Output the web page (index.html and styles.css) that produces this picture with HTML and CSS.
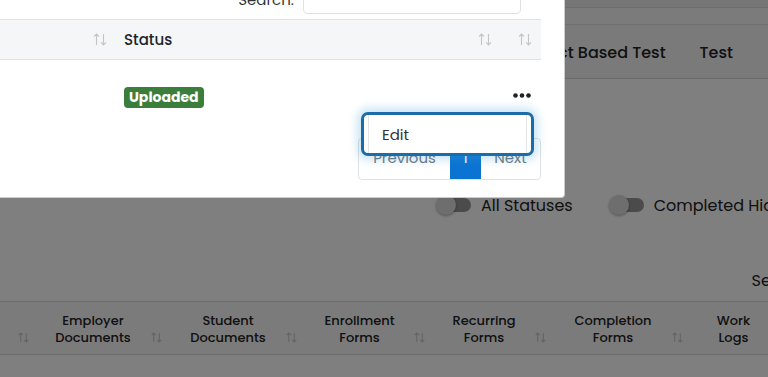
FILE: index.html
```html
<!DOCTYPE html>
<html lang="en">
<head>
<meta charset="utf-8">
<title>Documents</title>
<link rel="stylesheet" href="styles.css">
</head>
<body>
<div class="page">
  <div class="topstrip"></div>
  <div class="subbar"></div>
  <div class="tabs">
    <span class="tab">Project Based Test</span>
    <span class="tab">Test</span>
  </div>
  <div class="filters">
    <div class="switch"><span class="sw"><span class="track"></span><span class="knob"></span></span><span class="sw-label">All Statuses</span></div>
    <div class="switch"><span class="sw"><span class="track"></span><span class="knob"></span></span><span class="sw-label">Completed Hidden</span></div>
  </div>
  <div class="searchrow"><span class="slabel">Search:</span></div>
  <div class="ghead">
    <div class="gcell"><span class="gtext"></span><svg class="sort-s" viewBox="0 0 12 12"><path d="M3 11V1M0.8 3.4L3 1l2.2 2.4M9 1v10M6.8 8.6L9 11l2.2-2.4"/></svg></div>
    <div class="gcell"><span class="gtext"><span class="ln">Employer</span><span class="ln">Documents</span></span><svg class="sort-s" viewBox="0 0 12 12"><path d="M3 11V1M0.8 3.4L3 1l2.2 2.4M9 1v10M6.8 8.6L9 11l2.2-2.4"/></svg></div>
    <div class="gcell"><span class="gtext"><span class="ln">Student</span><span class="ln">Documents</span></span><svg class="sort-s" viewBox="0 0 12 12"><path d="M3 11V1M0.8 3.4L3 1l2.2 2.4M9 1v10M6.8 8.6L9 11l2.2-2.4"/></svg></div>
    <div class="gcell"><span class="gtext"><span class="ln">Enrollment</span><span class="ln">Forms</span></span><svg class="sort-s" viewBox="0 0 12 12"><path d="M3 11V1M0.8 3.4L3 1l2.2 2.4M9 1v10M6.8 8.6L9 11l2.2-2.4"/></svg></div>
    <div class="gcell"><span class="gtext"><span class="ln">Recurring</span><span class="ln">Forms</span></span><svg class="sort-s" viewBox="0 0 12 12"><path d="M3 11V1M0.8 3.4L3 1l2.2 2.4M9 1v10M6.8 8.6L9 11l2.2-2.4"/></svg></div>
    <div class="gcell"><span class="gtext"><span class="ln">Completion</span><span class="ln">Forms</span></span><svg class="sort-s" viewBox="0 0 12 12"><path d="M3 11V1M0.8 3.4L3 1l2.2 2.4M9 1v10M6.8 8.6L9 11l2.2-2.4"/></svg></div>
    <div class="gcell"><span class="gtext"><span class="ln">Work</span><span class="ln">Logs</span></span><svg class="sort-s" viewBox="0 0 12 12"><path d="M3 11V1M0.8 3.4L3 1l2.2 2.4M9 1v10M6.8 8.6L9 11l2.2-2.4"/></svg></div>
  </div>
</div>

<div class="overlay"></div>

<div class="modal">
  <div class="msearch">
    <label class="mlabel">Search:</label>
    <span class="minput"></span>
  </div>
  <div class="mtable">
    <div class="mhead">
      <div class="mc c1"><span></span><svg class="sort-m" viewBox="0 0 14 13"><path d="M3.5 12V1M1 3.7L3.5 1 6 3.7M10.5 1v11M8 9.3l2.5 2.7 2.5-2.7"/></svg></div>
      <div class="mc c2"><span class="mth">Status</span><svg class="sort-m" viewBox="0 0 14 13"><path d="M3.5 12V1M1 3.7L3.5 1 6 3.7M10.5 1v11M8 9.3l2.5 2.7 2.5-2.7"/></svg></div>
      <div class="mc c3"><span></span><svg class="sort-m" viewBox="0 0 14 13"><path d="M3.5 12V1M1 3.7L3.5 1 6 3.7M10.5 1v11M8 9.3l2.5 2.7 2.5-2.7"/></svg></div>
    </div>
    <div class="mrow">
      <div class="mc c1"></div>
      <div class="mc c2"><span class="badge">Uploaded</span></div>
      <div class="mc c3 actions"><svg class="dots" viewBox="0 0 18 5"><circle cx="2.5" cy="2.5" r="2.3"/><circle cx="9" cy="2.5" r="2.3"/><circle cx="15.5" cy="2.5" r="2.3"/></svg></div>
    </div>
  </div>
  <div class="pager-row">
    <div class="pager">
      <span class="pg prev">Previous</span>
      <span class="pg active">1</span>
      <span class="pg next">Next</span>
    </div>
  </div>
</div>

<div class="dropdown">
  <div class="ditem">Edit</div>
</div>
</body>
</html>
```

FILE: styles.css
```css
* { box-sizing: border-box; }
html, body { margin: 0; padding: 0; }
body {
  width: 768px;
  height: 377px;
  overflow: hidden;
  position: relative;
  font-family: "Poppins", "Open Sans", "Noto Sans", sans-serif;
  color: #222;
  background: #fff;
}

/* background page */
.page { width: 768px; }
.topstrip { height: 8px; background: #ececec; border-bottom: 1px solid #dadada; }
.subbar { height: 17px; background: #f7f7f7; border-bottom: 1px solid #dedede; }
.tabs {
  height: 54px;
  background: #f4f4f4;
  border-bottom: 1px solid #d6d6d6;
  display: flex;
  justify-content: flex-end;
  align-items: center;
  gap: 34px;
  padding-right: 35px;
  padding-top: 2px;
  white-space: nowrap;
}
.tab { font-size: 16px; font-weight: 500; color: #222; }

.filters {
  margin-top: 116px;
  height: 20px;
  display: flex;
  align-items: center;
  gap: 36px;
  padding-left: 436px;
  white-space: nowrap;
}
.switch { display: flex; align-items: center; gap: 10px; }
.sw { position: relative; width: 35px; height: 20px; display: block; }
.track {
  position: absolute; left: 9px; top: 3px;
  width: 26px; height: 14px; border-radius: 7px;
  background: #979797;
}
.knob {
  position: absolute; left: 0; top: 0;
  width: 20px; height: 20px; border-radius: 50%;
  background: #dcdcdc;
  box-shadow: 0 1px 3px rgba(0,0,0,.35);
}
.sw-label { font-size: 16px; color: #222; }

.searchrow {
  margin-top: 57px;
  height: 18px;
  display: flex;
  justify-content: flex-end;
  white-space: nowrap;
  overflow: hidden;
}
.slabel { font-size: 16px; line-height: 18px; color: #222; margin-right: -43px; }

.ghead {
  margin-top: 11px;
  height: 54px;
  background: #f7f7f7;
  border-top: 1px solid #d8d8d8;
  border-bottom: 1px solid #d8d8d8;
  display: grid;
  grid-template-columns: 33px 135px 135px 128px 121px 137px 104px;
  overflow: hidden;
}
.gcell {
  display: flex;
  align-items: flex-end;
  justify-content: space-between;
  padding: 0 6px 8px 10px;
  gap: 8px;
}
.gtext {
  flex: 1;
  display: flex;
  flex-direction: column;
  align-items: center;
  font-size: 13px;
  line-height: 17px;
  font-weight: 500;
  color: #222;
  white-space: nowrap;
}
.ln { display: block; }
.sort-s { width: 11px; height: 11px; flex: none; margin-bottom: 3px; }
.sort-s path, .sort-m path { fill: none; stroke: #c4c4c4; stroke-width: 1.1; }

.overlay {
  position: absolute; left: 0; top: 0; right: 0; bottom: 0;
  background: rgba(0,0,0,.5);
}

/* modal */
.modal {
  position: absolute;
  left: -10px;
  top: -17px;
  width: 575px;
  background: #fff;
  border: 1px solid rgba(0,0,0,.2);
  border-radius: 0 0 4px 4px;
  padding: 0 23px 17px 0;
}
.msearch {
  height: 30px;
  display: flex;
  align-items: center;
  justify-content: flex-end;
  gap: 9px;
  padding-right: 20px;
}
.mlabel { font-size: 15px; color: #333; }
.minput {
  width: 218px; height: 30px;
  border: 1px solid #dde2e6;
  border-radius: 4px;
  background: #fff;
}
.mtable { margin-top: 5px; }
.mhead {
  display: grid;
  grid-template-columns: 125px 385px 40px;
  height: 41px;
  background: #f5f6f8;
  border-top: 1px solid #dfe3e8;
  border-bottom: 1px solid #dfe3e8;
}
.mrow {
  display: grid;
  grid-template-columns: 125px 385px 40px;
  height: 74px;
}
.mc { display: flex; align-items: center; justify-content: space-between; padding: 0 9px 0 8px; }
.mth { font-size: 15px; font-weight: 500; color: #212529; }
.sort-m { width: 14px; height: 13px; flex: none; }
.badge {
  display: inline-block;
  height: 21px;
  line-height: 21px;
  padding: 0 5px;
  background: #3b7e3c;
  color: #fff;
  font-size: 14px;
  font-weight: 700;
  border-radius: 4px;
  margin-top: 1px;
}
.actions { justify-content: center; padding: 0 0 0 2px; }
.dots { width: 18px; height: 5px; margin-top: -4px; }
.dots circle { fill: #222; }

.pager-row { display: flex; justify-content: flex-end; margin-top: 4px; }
.pager {
  display: flex;
  width: 183px;
  height: 42px;
  border: 1px solid #dee2e6;
  border-radius: 4px;
  overflow: hidden;
}
.pg { display: flex; align-items: center; justify-content: center; font-size: 15px; color: #6c757d; padding-bottom: 3px; }
.prev { width: 91px; }
.active { width: 31px; background: #0b73d2; color: #fff; }
.next { width: 59px; }

/* dropdown menu over the pager */
.dropdown {
  position: absolute;
  left: 361px;
  top: 112px;
  width: 173px;
  height: 44px;
  background: #fff;
  border: 3px solid #1b6ca8;
  border-radius: 7px;
  box-shadow: 0 0 9px 4px rgba(70,160,215,.28);
  padding: 0 4px;
}
.ditem {
  height: 100%;
  border-left: 1px solid #e4e4e4;
  border-right: 1px solid #e4e4e4;
  display: flex;
  align-items: center;
  padding-left: 13px;
  font-size: 15px;
  color: #333;
}
```
